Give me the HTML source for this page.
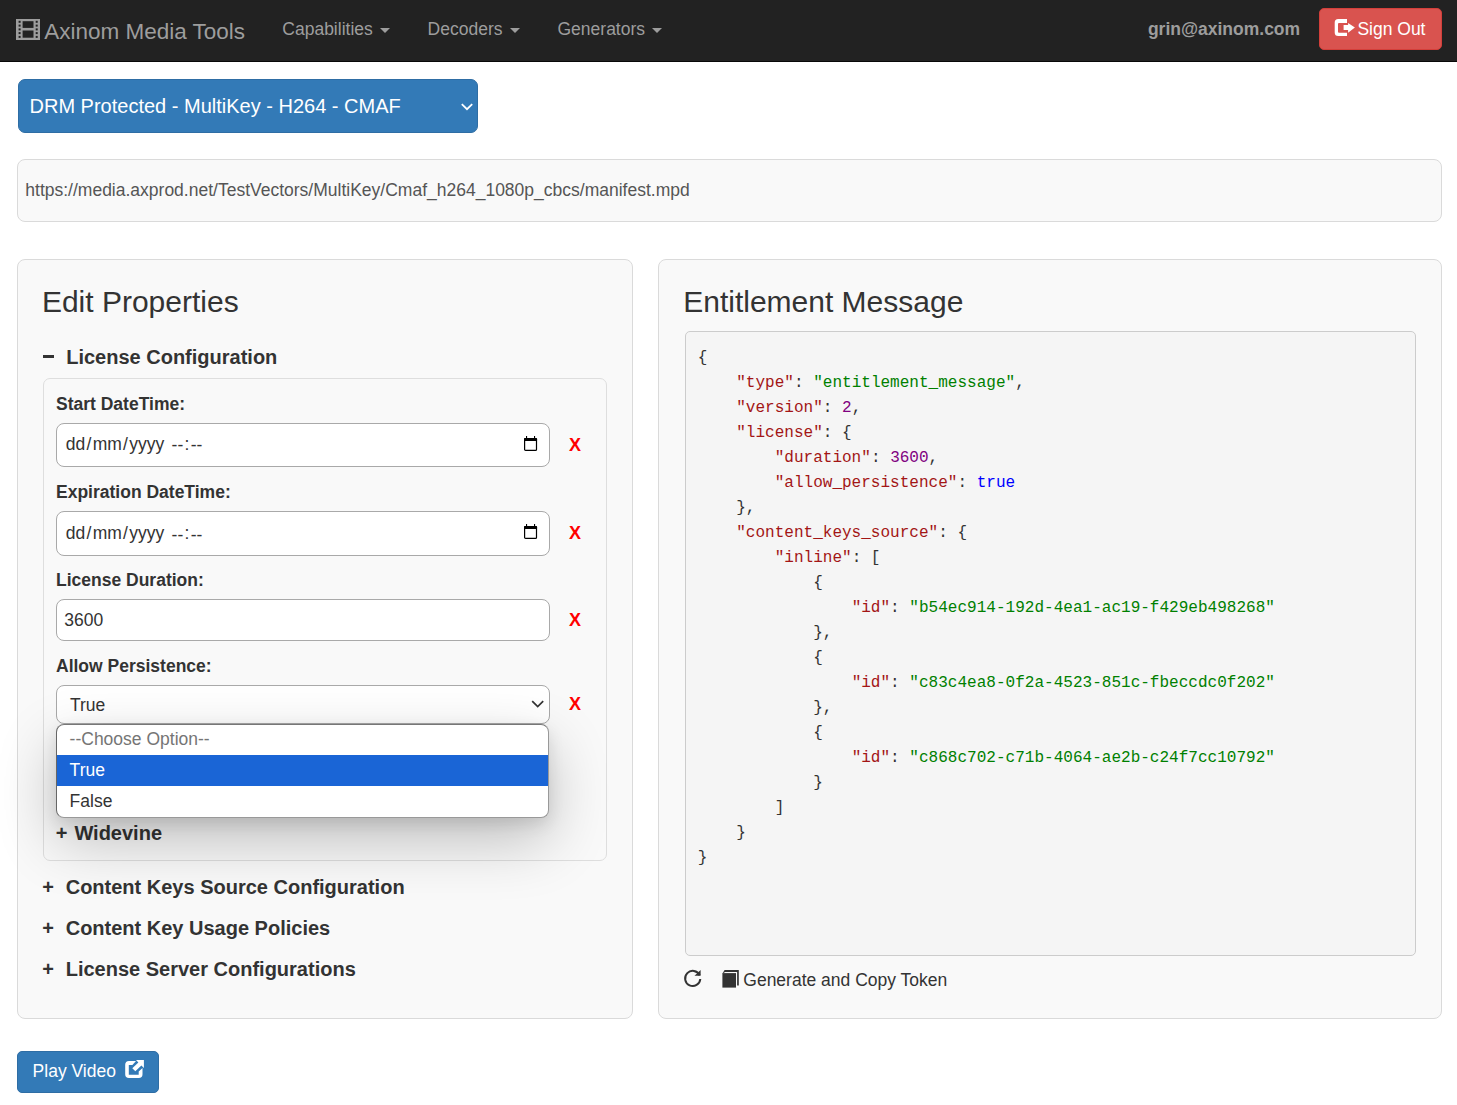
<!DOCTYPE html>
<html><head><meta charset="utf-8">
<style>
*{box-sizing:border-box;margin:0;padding:0}
html,body{width:1457px;height:1105px;overflow:hidden;background:#fff}
body{font-family:"Liberation Sans",sans-serif;font-size:17.5px;line-height:25px;color:#333;position:relative}
.a{position:absolute;white-space:pre}
.nav{position:absolute;left:0;top:0;width:1457px;height:62px;background:#222;border-bottom:1px solid #080808}
.nl{color:#9d9d9d}
.caret{position:absolute;width:0;height:0;border-left:5px solid transparent;border-right:5px solid transparent;border-top:5px solid #9d9d9d}
.b{font-weight:bold}
.well{position:absolute;background:#f9f9f9;border:1px solid #dadada;border-radius:8px}
.inp{position:absolute;background:#fff;border:1px solid #a9a9a9;border-radius:8px}
.df span{padding:0 1.25px}.df .dd{position:relative;top:1.5px}
.x{position:absolute;color:#f00;font-weight:bold;font-size:18px}
.lbl{font-weight:bold}
.h3{font-size:30px;line-height:33px}
.h4{font-size:20px;font-weight:bold}
pre{font-family:"Liberation Mono",monospace;font-size:16.0417px;line-height:25px;color:#333}
.k{color:#a31515}.s{color:#008000}.n{color:#800080}.t{color:#0000ff}
</style></head><body>

<div class="nav">
  <svg class="a" style="left:16px;top:19px" width="24" height="21" viewBox="0 0 24 21">
    <rect x="0" y="0" width="24" height="21" fill="#9d9d9d"/>
    <rect x="6.6" y="2.2" width="10.9" height="6.7" fill="#222"/>
    <rect x="6.6" y="11.5" width="10.9" height="7.2" fill="#222"/>
    <g fill="#222">
      <rect x="2.6" y="1.8" width="2" height="2"/><rect x="2.6" y="5.6" width="2" height="2"/><rect x="2.6" y="9.4" width="2" height="2"/><rect x="2.6" y="13.1" width="2" height="2"/><rect x="2.6" y="16.9" width="2" height="2"/>
      <rect x="19.7" y="1.8" width="2" height="2"/><rect x="19.7" y="5.6" width="2" height="2"/><rect x="19.7" y="9.4" width="2" height="2"/><rect x="19.7" y="13.1" width="2" height="2"/><rect x="19.7" y="16.9" width="2" height="2"/>
    </g>
  </svg>
  <div class="a nl" style="left:44.2px;top:19px;font-size:22.5px">Axinom Media Tools</div>
  <div class="a nl" style="left:282.3px;top:17px">Capabilities</div>
  <div class="caret" style="left:380px;top:28px"></div>
  <div class="a nl" style="left:427.6px;top:17px">Decoders</div>
  <div class="caret" style="left:510px;top:28px"></div>
  <div class="a nl" style="left:557.5px;top:17px">Generators</div>
  <div class="caret" style="left:652px;top:28px"></div>
  <div class="a nl b" style="left:1147.9px;top:17px">grin@axinom.com</div>
  <div class="a" style="left:1319px;top:8px;width:123px;height:42px;background:#d9534f;border:1px solid #d43f3a;border-radius:5px"></div>
  <svg class="a" style="left:1334px;top:19px" width="22" height="18" viewBox="0 0 22 18">
    <path fill="#fff" d="M4.2 0H13V3.9H5Q4 3.9 4 4.9V12.8Q4 13.8 5 13.8H13V17H4.2Q0.7 17 0.7 13.5V3.5Q0.7 0 4.2 0Z"/>
    <path fill="#fff" d="M9.6 6H14.1V3.9L20.9 8.5L14.1 13.8V11H9.6Z"/>
  </svg>
  <div class="a" style="left:1357.4px;top:17px;color:#fff">Sign Out</div>
</div>

<!-- DRM select -->
<div class="a" style="left:17.5px;top:78.5px;width:460.7px;height:54.5px;background:#337ab7;border:1px solid #2e6da4;border-radius:7px"></div>
<div class="a" style="left:29.5px;top:94px;font-size:20px;color:#fff">DRM Protected - MultiKey - H264 - CMAF</div>
<svg class="a" style="left:461px;top:103px" width="12" height="9" viewBox="0 0 12 9"><path d="M0.8 1.2L6 6.2L11.2 1.2" fill="none" stroke="#fff" stroke-width="1.8"/></svg>

<!-- URL well -->
<div class="well" style="left:17px;top:159px;width:1425px;height:63px"></div>
<div class="a" style="left:25.3px;top:178px;color:#555">https://media.axprod.net/TestVectors/MultiKey/Cmaf_h264_1080p_cbcs/manifest.mpd</div>

<!-- left panel -->
<div class="well" style="left:17px;top:259px;width:616px;height:760px"></div>
<div class="a h3" style="left:41.9px;top:285px">Edit Properties</div>
<div class="a" style="left:43.3px;top:354.5px;width:10.6px;height:3.5px;background:#333"></div>
<div class="a h4" style="left:66.2px;top:345px">License Configuration</div>

<div class="well" style="left:43px;top:378px;width:564px;height:483px;border-radius:7px;border-color:#dedede"></div>

<div class="a lbl" style="left:56px;top:392px">Start DateTime:</div>
<div class="inp" style="left:56px;top:423px;width:494px;height:44px"></div>
<div class="a df" style="left:64.6px;top:431.6px"><span>dd</span>/<span>mm</span>/<span>yyyy</span> <span class="dd">--</span>:<span class="dd">--</span></div>
<svg class="a" style="left:524px;top:436px" width="14" height="15" viewBox="0 0 14 15"><rect x="0" y="1.9" width="13.1" height="3.2" rx="1" fill="#000"/><rect x="0.6" y="2.5" width="11.9" height="11.9" rx="1" fill="none" stroke="#000" stroke-width="1.2"/><rect x="2" y="0" width="1.1" height="2.5" fill="#000"/><rect x="10" y="0" width="1.1" height="2.5" fill="#000"/></svg>
<div class="x" style="left:569px;top:433px">X</div>

<div class="a lbl" style="left:56px;top:480px">Expiration DateTime:</div>
<div class="inp" style="left:56px;top:511px;width:494px;height:45px"></div>
<div class="a df" style="left:64.6px;top:521px"><span>dd</span>/<span>mm</span>/<span>yyyy</span> <span class="dd">--</span>:<span class="dd">--</span></div>
<svg class="a" style="left:524px;top:524px" width="14" height="15" viewBox="0 0 14 15"><rect x="0" y="1.9" width="13.1" height="3.2" rx="1" fill="#000"/><rect x="0.6" y="2.5" width="11.9" height="11.9" rx="1" fill="none" stroke="#000" stroke-width="1.2"/><rect x="2" y="0" width="1.1" height="2.5" fill="#000"/><rect x="10" y="0" width="1.1" height="2.5" fill="#000"/></svg>
<div class="x" style="left:569px;top:521px">X</div>

<div class="a lbl" style="left:56px;top:568px">License Duration:</div>
<div class="inp" style="left:56px;top:599px;width:494px;height:42px"></div>
<div class="a" style="left:64.2px;top:607.6px">3600</div>
<div class="x" style="left:569px;top:608px">X</div>

<div class="a lbl" style="left:56px;top:653.7px">Allow Persistence:</div>
<div class="inp" style="left:56px;top:685px;width:494px;height:39px"></div>
<div class="a" style="left:69.9px;top:692.6px">True</div>
<svg class="a" style="left:531px;top:700px" width="14" height="10" viewBox="0 0 14 10"><path d="M1.2 1.2L6.7 6.6L12.2 1.2" fill="none" stroke="#333" stroke-width="1.7"/></svg>
<div class="x" style="left:569px;top:692px">X</div>

<div class="a h4" style="left:55.8px;top:820.8px">+</div>
<div class="a h4" style="left:74.4px;top:820.8px">Widevine</div>

<div class="a h4" style="left:42.3px;top:874.7px">+</div>
<div class="a h4" style="left:65.7px;top:874.7px">Content Keys Source Configuration</div>
<div class="a h4" style="left:42.3px;top:915.9px">+</div>
<div class="a h4" style="left:65.7px;top:915.9px">Content Key Usage Policies</div>
<div class="a h4" style="left:42.3px;top:956.9px">+</div>
<div class="a h4" style="left:65.7px;top:956.9px">License Server Configurations</div>

<!-- dropdown popup -->
<div class="a" style="left:56px;top:724px;width:492.5px;height:93.5px;background:#fff;border:1px solid #999;border-left-color:#666;border-top-color:#777;border-radius:8px;box-shadow:0 22px 60px rgba(0,0,0,0.24),0 6px 16px rgba(0,0,0,0.1);overflow:hidden">
  <div class="a" style="left:0;top:30.2px;width:100%;height:30.5px;background:#1a65d6"></div>
</div>
<div class="a" style="left:69.6px;top:727.3px;color:#757575">--Choose Option--</div>
<div class="a" style="left:69.6px;top:757.8px;color:#fff">True</div>
<div class="a" style="left:69.6px;top:788.7px;color:#333">False</div>

<!-- Play Video -->
<div class="a" style="left:17px;top:1051px;width:141.8px;height:42px;background:#337ab7;border:1px solid #2e6da4;border-radius:5px"></div>
<div class="a" style="left:32.6px;top:1059px;color:#fff">Play Video</div>
<svg class="a" style="left:120px;top:1055px" width="26" height="26" viewBox="0 0 26 26">
  <path fill="#fff" d="M16 6H9Q5.2 6 5.2 9.8V19.3Q5.2 23.1 9 23.1H18.7Q22.5 23.1 22.5 19.3V13L18.7 16.6V19.8H8.8V10H12.4Z"/>
  <path fill="#fff" d="M16 5H23.9V12.9L21.4 10.4L15.3 16.3L12.3 13.3L18.4 7.4Z"/>
</svg>

<!-- right panel -->
<div class="well" style="left:658px;top:259px;width:784px;height:760px"></div>
<div class="a h3" style="left:683.2px;top:285px">Entitlement Message</div>
<div class="a" style="left:684.5px;top:331px;width:731px;height:624.5px;background:#f5f5f5;border:1px solid #ccc;border-radius:5px"></div>
<pre class="a" style="left:697.7px;top:345.5px">{
    <span class="k">"type"</span>: <span class="s">"entitlement_message"</span>,
    <span class="k">"version"</span>: <span class="n">2</span>,
    <span class="k">"license"</span>: {
        <span class="k">"duration"</span>: <span class="n">3600</span>,
        <span class="k">"allow_persistence"</span>: <span class="t">true</span>
    },
    <span class="k">"content_keys_source"</span>: {
        <span class="k">"inline"</span>: [
            {
                <span class="k">"id"</span>: <span class="s">"b54ec914-192d-4ea1-ac19-f429eb498268"</span>
            },
            {
                <span class="k">"id"</span>: <span class="s">"c83c4ea8-0f2a-4523-851c-fbeccdc0f202"</span>
            },
            {
                <span class="k">"id"</span>: <span class="s">"c868c702-c71b-4064-ae2b-c24f7cc10792"</span>
            }
        ]
    }
}</pre>

<svg class="a" style="left:680px;top:965px" width="26" height="26" viewBox="0 0 26 26">
  <path d="M19.6 10.2A7.6 7.6 0 1 0 20.3 14" fill="none" stroke="#333" stroke-width="2"/>
  <path d="M14.5 10.8L20.6 10.8L20.6 5Z" fill="#333"/>
</svg>
<svg class="a" style="left:720px;top:967px" width="22" height="24" viewBox="0 0 22 24">
  <path fill="#333" d="M4.6 3H18.8V18.6H17.1V5H5.2L2.4 6.5Z"/>
  <rect x="2.4" y="6.1" width="13.6" height="14.5" fill="#333"/>
</svg>
<div class="a" style="left:743.3px;top:968.2px">Generate and Copy Token</div>

</body></html>
